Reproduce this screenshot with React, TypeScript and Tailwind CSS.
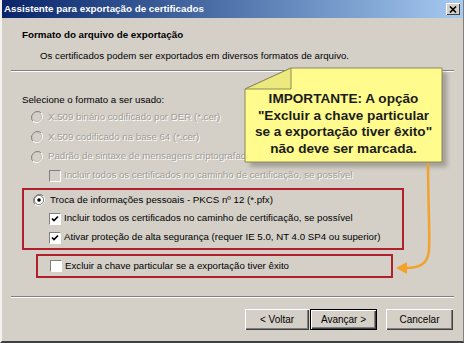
import React from "react";

const font = "font-['Liberation_Sans',Arial,sans-serif]";

function Radio({ checked, disabled }: { checked?: boolean; disabled?: boolean }) {
  return (
    <svg width="12" height="12" viewBox="0 0 12 12" className="shrink-0">
      <path d="M10.2 1.8 A6 6 0 0 0 1.8 10.2" fill="none" stroke="#808080" strokeWidth="1" />
      <path d="M1.8 10.2 A6 6 0 0 0 10.2 1.8" fill="none" stroke="#ffffff" strokeWidth="1" />
      <circle cx="6" cy="6" r="4.6" fill={disabled ? "#d4d0c8" : "#ffffff"} stroke={disabled ? "#b8b4ac" : "#404040"} strokeWidth="0.6" />
      {checked && <circle cx="6" cy="6" r="1.8" fill="#000" />}
    </svg>
  );
}

function Check({ checked, disabled }: { checked?: boolean; disabled?: boolean }) {
  return (
    <div
      className={`w-[12px] h-[12px] shrink-0 border border-t-[#808080] border-l-[#808080] border-b-white border-r-white flex items-center justify-center ${
        disabled ? "bg-[#d4d0c8]" : "bg-white"
      }`}
    >
      {checked && (
        <svg width="8" height="8" viewBox="0 0 8 8">
          <path d="M1 3.5 L3 5.5 L7 1.5" fill="none" stroke="#000" strokeWidth="1.7" />
        </svg>
      )}
    </div>
  );
}

const grey = "text-[#a09c94] [text-shadow:1px_1px_0_#ffffff]";

function Button({ label, primary }: { label: string; primary?: boolean }) {
  return (
    <div
      className={`h-[21px] flex items-center justify-center text-[10px] text-black bg-[#d4d0c8] ${
        primary
          ? "border border-black shadow-[inset_1px_1px_0_#fff,inset_-1px_-1px_0_#404040,inset_-2px_-2px_0_#808080]"
          : "shadow-[inset_1px_1px_0_#fff,inset_-1px_-1px_0_#404040,inset_-2px_-2px_0_#808080]"
      }`}
    >
      {label}
    </div>
  );
}

export default function App() {
  return (
    <div
      className={`${font} relative w-[464px] h-[343px] overflow-hidden bg-[#d4d0c8] text-[9.7px] text-black whitespace-nowrap border-l-2 border-l-[#f4f2ee] border-b-2 border-b-[#404040] border-r border-r-[#808080]`}
    >
      {/* title bar */}
      <div className="h-[18px] flex items-center justify-between pl-[2px] pr-[3px] bg-gradient-to-r from-[#0a246a] to-[#a6caf0]">
        <span className="text-white font-bold text-[9.8px]">Assistente para exportação de certificados</span>
        <div className="w-[14px] h-[12px] bg-[#d4d0c8] flex items-center justify-center shadow-[inset_1px_1px_0_#fff,inset_-1px_-1px_0_#404040]">
          <svg width="8" height="7" viewBox="0 0 8 7">
            <path d="M1 0.5 L7 6.5 M7 0.5 L1 6.5" stroke="#000" strokeWidth="1.6" />
          </svg>
        </div>
      </div>

      {/* header */}
      <div className="pt-[10px] pl-[20px]">
        <div className="h-[14px] flex items-center font-bold text-[9.8px]">Formato do arquivo de exportação</div>
        <div className="h-[14px] mt-[7px] pl-[18px] flex items-center">
          Os certificados podem ser exportados em diversos formatos de arquivo.
        </div>
      </div>
      <div className="mt-[7px] mx-[9px] h-[2px] border-t border-t-[#808080] border-b border-b-white" />

      {/* body */}
      <div className="pl-[20px]">
        <div className="h-[14px] mt-[21px] flex items-center">Selecione o formato a ser usado:</div>
        <div className="pl-[9px]">
          <div className={`h-[20px] flex items-center gap-[5px] ${grey}`}>
            <Radio disabled /> X.509 binário codificado por DER (*.cer)
          </div>
          <div className={`h-[20px] flex items-center gap-[5px] ${grey}`}>
            <Radio disabled /> X.509 codificado na base 64 (*.cer)
          </div>
          <div className={`h-[19px] flex items-center gap-[5px] ${grey}`}>
            <Radio disabled /> Padrão de sintaxe de mensagens criptografadas - Certificados PKCS nº 7 (*.p7b)
          </div>
          <div className={`h-[19px] pl-[18px] flex items-center gap-[3px] ${grey}`}>
            <Check disabled /> Incluir todos os certificados no caminho de certificação, se possível
          </div>
        </div>

        <div className="mt-[3px] w-[382px] border-2 border-[#b0202c] pl-[9px] py-[1px]">
          <div className="h-[18px] flex items-center gap-[5px]">
            <Radio checked /> Troca de informações pessoais - PKCS nº 12 (*.pfx)
          </div>
          <div className="h-[19px] pl-[16px] flex items-center gap-[3px]">
            <Check checked /> Incluir todos os certificados no caminho de certificação, se possível
          </div>
          <div className="h-[19px] pl-[16px] flex items-center gap-[3px]">
            <Check checked /> Ativar proteção de alta segurança (requer IE 5.0, NT 4.0 SP4 ou superior)
          </div>
        </div>

        <div className="mt-[4px] ml-[14px] w-[357px] h-[24px] border-2 border-[#b0202c] pl-[12px] flex items-center gap-[3px]">
          <Check /> Excluir a chave particular se a exportação tiver êxito
        </div>
      </div>

      <div className="mt-[18px] mx-[9px] h-[2px] border-t border-t-[#808080] border-b border-b-white" />

      {/* buttons */}
      <div className="mt-[11px] flex justify-end pr-[10px]">
        <div className="w-[64px]">
          <Button label="< Voltar" />
        </div>
        <div className="w-[67px] ml-[1px]">
          <Button label="Avançar >" primary />
        </div>
        <div className="w-[67px] ml-[9px]">
          <Button label="Cancelar" />
        </div>
      </div>

      {/* callout note */}
      <svg className="absolute left-[238px] top-[62px]" width="215" height="110" viewBox="240 62 215 110">
        <defs>
          <filter id="sh" x="-10%" y="-10%" width="130%" height="130%">
            <feGaussianBlur stdDeviation="2" />
          </filter>
        </defs>
        <path d="M295 72 H447 V167 H250 V93 Z" fill="#7a7872" opacity="0.55" filter="url(#sh)" />
        <path d="M291 68 H442 V162 H245 V89 Z" fill="#fffb8c" stroke="#8c8a5a" strokeWidth="1" />
        <path d="M291 68 V89 H245 Z" fill="#ecea7e" stroke="#8c8a5a" strokeWidth="1" />
      </svg>
      <div className="absolute left-[243px] top-[91px] w-[197px] text-center font-bold text-[13.6px] leading-[16.5px] text-[#1c1c1c]">
        IMPORTANTE: A opção
        <br />
        "Excluir a chave particular
        <br />
        se a exportação tiver êxito"
        <br />
        não deve ser marcada.
      </div>

      {/* arrow */}
      <svg className="absolute left-[-2px] top-0 pointer-events-none" width="464" height="343">
        <path d="M428 163 C428 200 430 235 429 250 C428 264 420 268 405 268" fill="none" stroke="#f2a22a" strokeWidth="2.5" />
        <path d="M396 268 L407 262 L407 274 Z" fill="#f2a22a" />
      </svg>
    </div>
  );
}
